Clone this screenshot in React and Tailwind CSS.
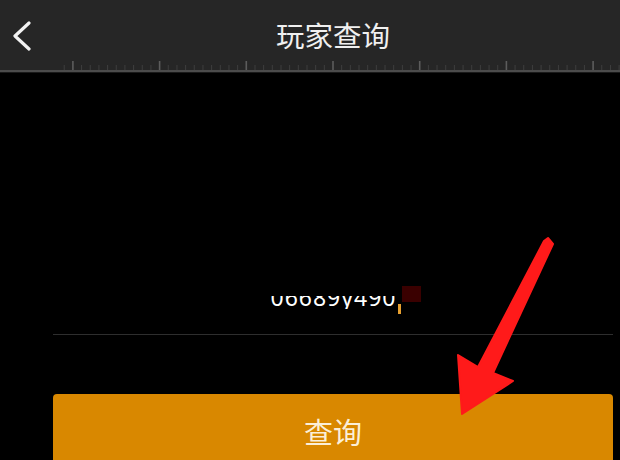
import React from "react";

const font = { fontFamily: '"Noto Sans CJK SC", "Noto Sans", sans-serif' };

function Ruler() {
  const ticks = [];
  const step = 8.67;
  for (let i = -40; i <= 40; i++) {
    const x = 333 + i * step;
    if (x < 64 || x > 620) continue;
    const major = ((i % 10) + 10) % 10 === 0;
    ticks.push(
      <line key={i} x1={x} x2={x} y1={major ? 0 : 4} y2={9} stroke={major ? "#5c5c5c" : "#3e3e3e"} strokeWidth={major ? 1.6 : 1} />
    );
  }
  return (
    <svg width="620" height="9" className="block">
      {ticks}
    </svg>
  );
}

export default function App() {
  return (
    <div className="relative w-[620px] h-[460px] overflow-hidden bg-black" style={font}>
      <div className="h-[73px] bg-[#262626] flex flex-col">
        <div className="relative flex-1 flex items-center justify-center">
          <svg width="22" height="32" viewBox="0 0 22 32" className="absolute left-[10px] top-[21px]">
            <polyline points="19,2 5,15 19,28" fill="none" stroke="#f2f2f2" strokeWidth="3.2" strokeLinecap="round" strokeLinejoin="round" />
          </svg>
          <span className="text-[28.5px] text-[#f0f0f0] leading-none mt-[10px] ml-[46px]">玩家查询</span>
        </div>
        <Ruler />
        <div className="h-[2px] bg-[#4c4c4c]" />
        <div className="h-[1px] bg-[#1a1a1a]" />
      </div>

      <div className="ml-[53px] mr-[7px]">
        <div className="h-[262px] flex items-end justify-center pb-[25px] border-b border-[#2e2e2e]">
          <div className="flex items-end ml-[26px]">
            <div className="h-[13px] overflow-hidden flex items-end">
              <span className="text-[23px] leading-[23px] text-white tracking-[1px]" style={{ fontFamily: '"Noto Sans", sans-serif' }}>06689y490</span>
            </div>
            <div className="w-[3px] h-[10px] bg-[#e8a030] ml-[2px] mb-[-5px]" />
            <div className="w-[19px] h-[16px] bg-[#3a0000] ml-[1px] mb-[7px]" />
          </div>
        </div>
        <div className="mt-[59px] h-[80px] bg-[#d98800] rounded-[4px] flex justify-center pt-[23px]">
          <span className="text-[29px] leading-none text-[#fbefd8]">查询</span>
        </div>
      </div>

      <svg width="620" height="460" className="absolute left-0 top-0 pointer-events-none">
        <polygon
          points="544,241 548,238 553,244 493,373 513,381 462,414 458,355 478,367"
          fill="#ff1a1a"
          stroke="#ff1a1a"
          strokeWidth="2"
          strokeLinejoin="round"
        />
      </svg>
    </div>
  );
}
